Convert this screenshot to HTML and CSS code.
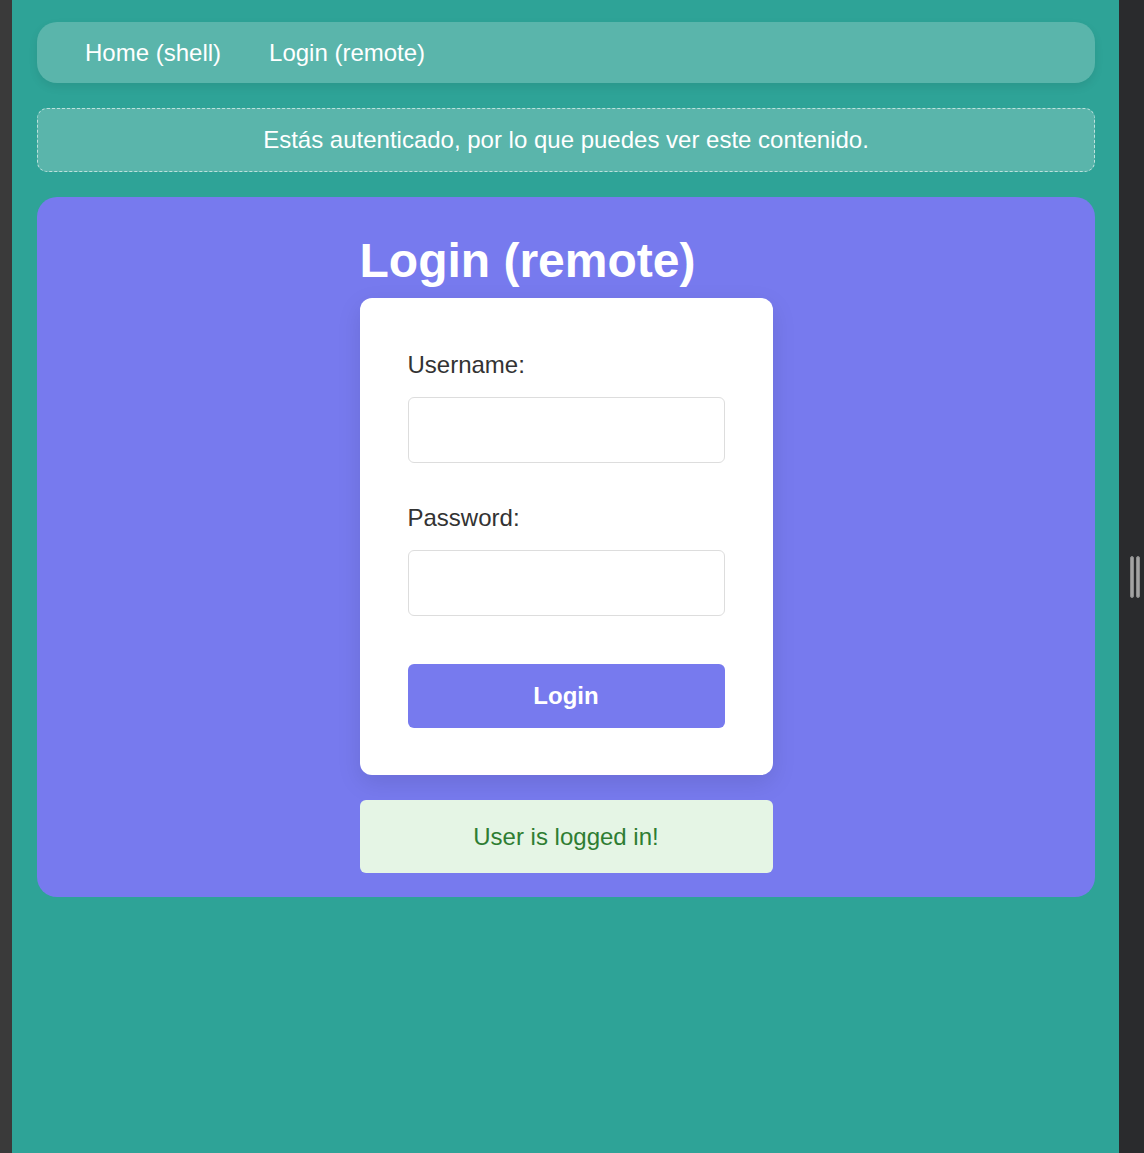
FILE: index.html
```html
<!DOCTYPE html>
<html lang="es">
<head>
<meta charset="utf-8">
<title>Login (remote)</title>
<link rel="stylesheet" href="styles.css">
</head>
<body>
<div class="frame">
  <div class="edge-left"></div>
  <main class="app">
    <nav class="nav">
      <a class="nav-link" href="#">Home (shell)</a>
      <a class="nav-link" href="#">Login (remote)</a>
    </nav>
    <div class="banner">Estás autenticado, por lo que puedes ver este contenido.</div>
    <section class="remote">
      <div class="remote-inner">
        <h1 class="title">Login (remote)</h1>
        <form class="card">
          <div class="group">
            <label class="label" for="u">Username:</label>
            <input class="input" id="u" type="text">
          </div>
          <div class="group">
            <label class="label" for="p">Password:</label>
            <input class="input" id="p" type="password">
          </div>
          <button class="btn" type="button">Login</button>
        </form>
        <div class="success">User is logged in!</div>
      </div>
    </section>
  </main>
  <div class="edge-right">
    <div class="handle"><span class="bar"></span><span class="bar"></span></div>
  </div>
</div>
</body>
</html>
```
FILE: styles.css
```css
* { box-sizing: border-box; }
html, body { margin: 0; padding: 0; height: 100%; }
body {
  font-family: "Liberation Sans", Arial, sans-serif;
  background: #2ea397;
}
.frame {
  display: flex;
  height: 1153px;
  overflow: hidden;
}
.edge-left {
  width: 12px;
  flex: none;
  background: #3a3a3a;
}
.edge-right {
  width: 25px;
  flex: none;
  background: #2a2b2d;
  display: flex;
  align-items: center;
  padding-left: 11px;
}
.handle {
  display: flex;
  gap: 2px;
}
.bar {
  width: 4px;
  height: 42px;
  border-radius: 2px;
  background: #a3a3a3;
  border: 1px solid #8a8a8a;
}
.app {
  flex: 1;
  background: #2ea397;
  padding: 22px 24px 0 25px;
}
.nav {
  height: 61px;
  display: flex;
  align-items: center;
  padding: 0 24px;
  background: #5ab5ab;
  border-radius: 20px;
  box-shadow: 0 4px 10px rgba(0, 0, 0, 0.08);
}
.nav-link {
  color: #ffffff;
  text-decoration: none;
  font-size: 24px;
  padding: 0 24px;
}
.banner {
  margin-top: 25px;
  height: 64px;
  display: flex;
  align-items: center;
  justify-content: center;
  background: #5ab5ab;
  border: 1px dashed rgba(255, 255, 255, 0.6);
  border-radius: 10px;
  color: #ffffff;
  font-size: 24px;
}
.remote {
  margin-top: 25px;
  background: #777aee;
  border-radius: 20px;
  padding: 24px;
  display: flex;
  justify-content: center;
}
.remote-inner {
  width: 413px;
}
.title {
  margin: 12px 0 10px;
  font-size: 48px;
  line-height: 55px;
  font-weight: bold;
  color: #ffffff;
}
.card {
  background: #ffffff;
  border-radius: 12px;
  padding: 49px 48px 47px;
  box-shadow: 0 8px 24px rgba(0, 0, 0, 0.1);
}
.group {
  margin-bottom: 37px;
}
.label {
  display: block;
  font-size: 24px;
  line-height: 36px;
  color: #333333;
  margin-bottom: 14px;
}
.input {
  display: block;
  width: 100%;
  height: 66px;
  border: 1px solid #dddddd;
  border-radius: 6px;
  font-family: inherit;
  font-size: 24px;
  padding: 0 18px;
}
.btn {
  display: block;
  width: 100%;
  height: 64px;
  margin-top: 48px;
  border: none;
  border-radius: 6px;
  background: #777aee;
  color: #ffffff;
  font-family: inherit;
  font-size: 24px;
  font-weight: bold;
}
.success {
  margin-top: 25px;
  height: 73px;
  display: flex;
  align-items: center;
  justify-content: center;
  background: #e5f5e5;
  color: #2e7d32;
  border-radius: 6px;
  font-size: 24px;
}
```
